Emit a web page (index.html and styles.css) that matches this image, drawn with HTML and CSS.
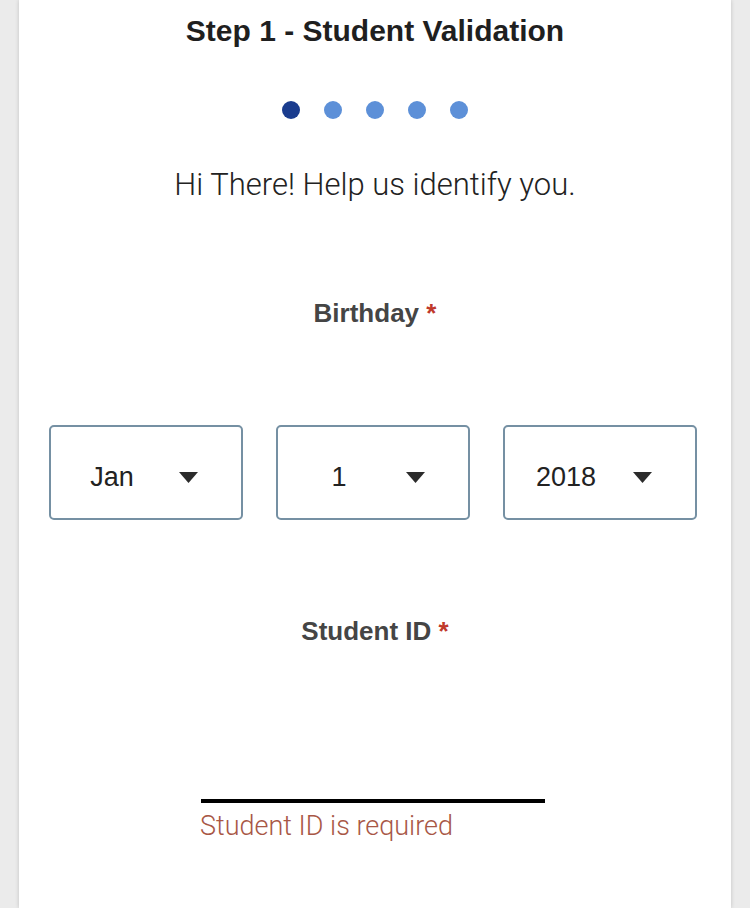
FILE: index.html
```html
<!DOCTYPE html>
<html lang="en">
<head>
    <meta charset="UTF-8">
    <meta name="viewport" content="width=device-width, initial-scale=1.0">
    <title>Step 1 - Student Validation</title>
    <link rel="stylesheet" href="styles.css">
</head>
<body>
    <div class="card">
        <h1 class="step-title">Step 1 - Student Validation</h1>

        <div class="steps">
            <span class="dot active"></span>
            <span class="dot"></span>
            <span class="dot"></span>
            <span class="dot"></span>
            <span class="dot"></span>
        </div>

        <p class="intro">Hi There! Help us identify you.</p>

        <div class="field birthday">
            <div class="field-label">Birthday <span class="required">*</span></div>
            <div class="date-row">
                <div class="select">
                    <span class="select-value">Jan</span>
                    <svg class="caret" width="19" height="11" viewBox="0 0 19 11"><path d="M0 0h19L9.5 11z" fill="#2b2b2b"/></svg>
                </div>
                <div class="select">
                    <span class="select-value">1</span>
                    <svg class="caret" width="19" height="11" viewBox="0 0 19 11"><path d="M0 0h19L9.5 11z" fill="#2b2b2b"/></svg>
                </div>
                <div class="select">
                    <span class="select-value">2018</span>
                    <svg class="caret" width="19" height="11" viewBox="0 0 19 11"><path d="M0 0h19L9.5 11z" fill="#2b2b2b"/></svg>
                </div>
            </div>
        </div>

        <div class="field student-id">
            <div class="field-label">Student ID <span class="required">*</span></div>
            <div class="text-input"></div>
            <div class="error">Student ID is required</div>
        </div>
    </div>
</body>
</html>
```

FILE: styles.css
```css
/* Fundo cinza com cartão branco ao centro */
body {
    margin: 0;
    background: #ebebeb;
    font-family: "Liberation Sans", Arial, sans-serif;
    color: #222222;
}
.card {
    width: 712px;
    min-height: 908px;
    margin: 0 auto;
    background: #ffffff;
    box-shadow: 0 0 4px rgba(0, 0, 0, 0.18);
    padding-top: 14px;
    box-sizing: border-box;
    text-align: center;
}
.step-title {
    margin: 0;
    font-size: 30px;
    line-height: 34px;
    font-weight: bold;
    color: #1f1f1f;
}
.steps {
    display: flex;
    justify-content: center;
    gap: 24px;
    margin-top: 53px;
}
.dot {
    width: 18px;
    height: 18px;
    border-radius: 50%;
    background: #5d90d8;
}
.dot.active {
    background: #1a3c8e;
}
.intro {
    margin: 49px 0 0;
    font-family: Roboto, "Liberation Sans", sans-serif;
    font-weight: 300;
    font-size: 31px;
    line-height: 34px;
    color: #222222;
}
.field-label {
    font-size: 26px;
    line-height: 30px;
    font-weight: bold;
    color: #454545;
}
.required {
    color: #c0392b;
}
.birthday {
    margin-top: 96px;
}
.date-row {
    display: flex;
    justify-content: space-between;
    margin: 97px 34px 0 30px;
}
.select {
    width: 194px;
    height: 95px;
    box-sizing: border-box;
    border: 2px solid #7590a3;
    border-radius: 5px;
    padding-top: 9px;
    display: flex;
    align-items: center;
}
.select-value {
    width: 122px;
    font-size: 27px;
    color: #222222;
}
.caret {
    margin-left: 6px;
}
.student-id {
    margin-top: 96px;
}
.text-input {
    width: 344px;
    height: 4px;
    background: #000000;
    margin: 153px 0 0 182px;
}
.error {
    margin: 8px 0 0 181px;
    text-align: left;
    font-family: Roboto, "Liberation Sans", sans-serif;
    font-weight: 300;
    font-size: 27px;
    line-height: 30px;
    color: #a85746;
}
```
